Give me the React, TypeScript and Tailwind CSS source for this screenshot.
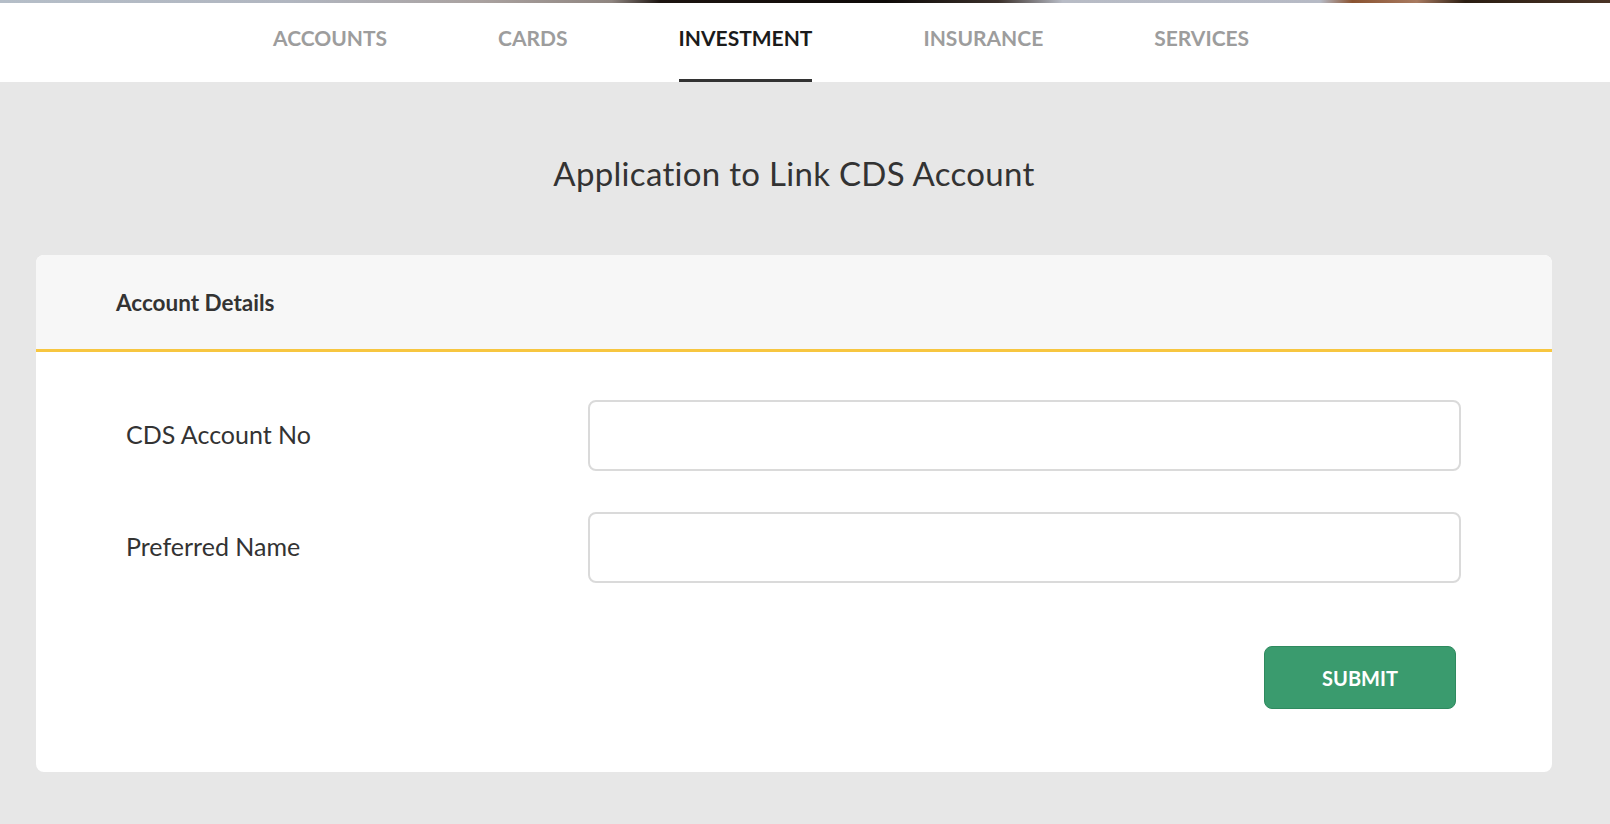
import { useState } from 'react';

const NAV_ITEMS = ['Accounts', 'Cards', 'Investment', 'Insurance', 'Services'];

export default function App() {
  const [active, setActive] = useState('Investment');
  const [cdsNo, setCdsNo] = useState('');
  const [prefName, setPrefName] = useState('');

  return (
    <div className="min-h-[824px] bg-[#e7e7e7] font-['Lato','Noto_Sans',sans-serif] text-[#333]">
      {/* hero photo edge peeking above the nav */}
      <div className="h-[3px] bg-[linear-gradient(90deg,#b5bec8_0%,#b1b6c0_18%,#a9a19f_30%,#8f8580_38%,#1c1410_41%,#0e0a08_55%,#3a302a_62%,#b8bcc6_66%,#b6bac5_82%,#8a5331_84%,#a87a60_88%,#2a1d12_91%,#4a3426_100%)]" />

      {/* Tab navigation */}
      <nav className="bg-white h-[79px]">
        <ul className="flex h-full pl-[273px] gap-[111px]">
          {NAV_ITEMS.map(item => (
            <li key={item} className="h-full">
              <button
                onClick={() => setActive(item)}
                className={`h-full flex items-center uppercase text-[21px] font-bold border-b-[3px] ${
                  active === item ? 'text-[#1b1b1b] border-[#333]' : 'text-[#9d9d9d] border-transparent'
                }`}
              >
                <span className="-mt-[6px]">{item}</span>
              </button>
            </li>
          ))}
        </ul>
      </nav>

      <main className="pl-[36px] pr-[58px] pt-[71px] pb-[51px]">
        <h1 className="text-center text-[33px] leading-[40px] tracking-[0.3px] text-[#333]">
          Application to Link CDS Account
        </h1>

        <section className="mt-[62px] bg-white rounded-[8px] overflow-hidden">
          <div className="h-[97px] bg-[#f7f7f7] border-b-[3px] border-[#f7c640] flex items-center pl-[80px]">
            <h2 className="text-[22.5px] font-bold text-[#333] mt-[2px]">Account Details</h2>
          </div>

          <form
            className="pt-[48px] pb-[63px] pl-[90px] pr-[91px]"
            onSubmit={e => e.preventDefault()}
          >
            <div className="flex flex-col gap-[41px]">
              <div className="flex items-center">
                <label className="w-[462px] text-[25px] text-[#333] -mt-[1px]">CDS Account No</label>
                <input
                  value={cdsNo}
                  onChange={e => setCdsNo(e.target.value)}
                  className="flex-1 h-[71px] rounded-[8px] border-2 border-[#dadada] px-4 text-[20px] outline-none"
                />
              </div>
              <div className="flex items-center">
                <label className="w-[462px] text-[25px] text-[#333] -mt-[1px]">Preferred Name</label>
                <input
                  value={prefName}
                  onChange={e => setPrefName(e.target.value)}
                  className="flex-1 h-[71px] rounded-[8px] border-2 border-[#dadada] px-4 text-[20px] outline-none"
                />
              </div>
            </div>

            <div className="flex justify-end mt-[63px] pr-[5px]">
              <button
                type="submit"
                className="w-[192px] h-[63px] rounded-[8px] bg-[#3a9b6e] border border-[#2f8a5f] text-white text-[20px] font-bold uppercase"
              >
                Submit
              </button>
            </div>
          </form>
        </section>
      </main>
    </div>
  );
}
